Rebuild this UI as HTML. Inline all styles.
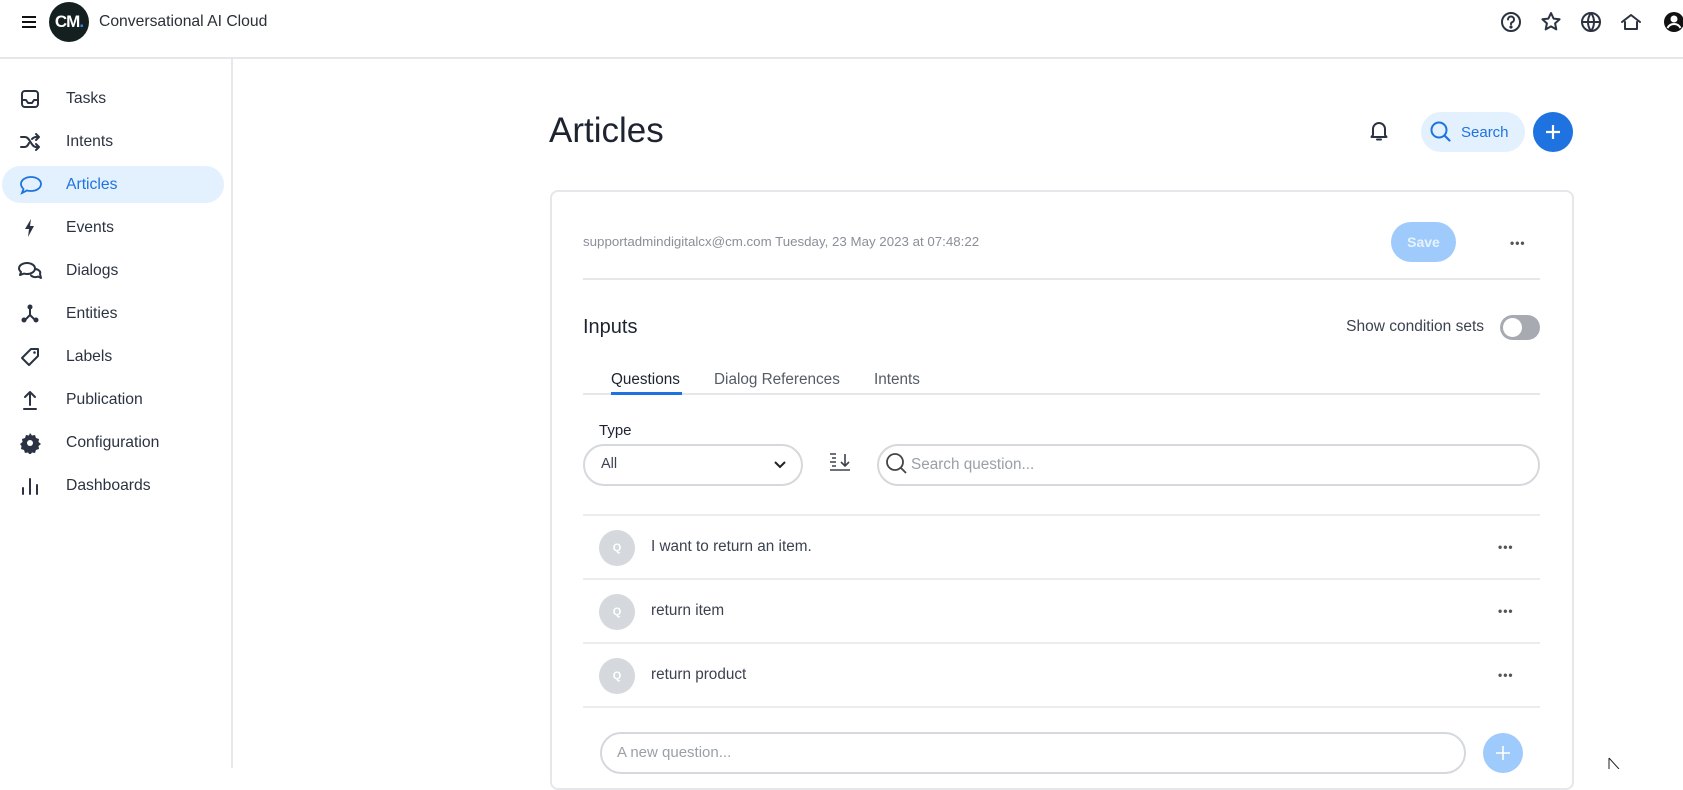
<!DOCTYPE html>
<html><head><meta charset="utf-8"><style>
*{box-sizing:border-box;margin:0;padding:0}
body{width:1683px;height:768px;overflow:hidden;background:#fff;font-family:"Liberation Sans",sans-serif;color:#1f2937;position:relative}
.abs{position:absolute}
.hdr{left:0;top:0;width:1683px;height:59px;border-bottom:2px solid #e6e7eb}
.side{left:0;top:59px;width:233px;height:709px;border-right:2px solid #e6e7eb}
.nav{position:absolute;left:0;width:222px;height:37px;display:flex;align-items:center;font-size:15.7px;color:#2b3342}
.nav svg{position:absolute;left:19px}
.nav span{position:absolute;left:66px}
.nav.act{background:#e3f0fd;border-radius:19px;left:2px;color:#1f73e0}
.nav.act span{left:64px}
.ti{fill:none;stroke:#2b3342;stroke-width:2;stroke-linecap:round;stroke-linejoin:round}
.card{left:550px;top:190px;width:1024px;height:600px;border:2px solid #e6e7eb;border-radius:8px}
.line{background:#e6e7eb;height:2px}
.dots{font-size:12px;color:#555;letter-spacing:1px;font-weight:bold}
.row{left:583px;width:957px;height:64px;border-bottom:2px solid #ececef}
.av{position:absolute;left:16px;top:14px;width:36px;height:36px;border-radius:50%;background:#d5d8dc;color:#fff;font-size:11px;font-weight:bold;text-align:center;line-height:36px}
.rt{position:absolute;left:68px;top:22px;font-size:15.3px;color:#3b4250}
.rd{position:absolute;left:915px;top:24px}
</style></head><body>
<div class="abs hdr"></div>
<svg class="abs" style="left:21px;top:14px" width="16" height="16"><path d="M1 3h14M1 8h14M1 13h14" stroke="#111" stroke-width="2"/></svg>
<div class="abs" style="left:49px;top:2px;width:40px;height:40px;border-radius:50%;background:#14201f;color:#fff;font-weight:bold;font-size:17px;line-height:40px;text-align:center;letter-spacing:-1px">CM<span style="color:#3b82f6">.</span></div>
<div class="abs" style="left:99px;top:13px;font-size:15.7px;color:#2b2f36">Conversational AI Cloud</div>
<svg class="abs" style="left:1500px;top:11px" width="184" height="24">
<g class="ti" stroke="#27313f"><circle cx="11" cy="11" r="9"/><path d="M8 8.5a3 3 0 1 1 4 2.8c-1 .4-1 1-1 2"/><circle cx="11" cy="16" r=".6" fill="#27313f"/>
<path d="M51 2l2.6 5.6 6 .7-4.5 4.1 1.2 6-5.3-3-5.3 3 1.2-6-4.5-4.1 6-.7z"/>
<circle cx="91" cy="11" r="9"/><path d="M82 11h18M91 2c-4 5-4 13 0 18M91 2c4 5 4 13 0 18"/>
<path d="M122 11l9-7 9 7M125 11v7h12v-7"/></g>
<circle cx="174" cy="11" r="10" fill="#111"/><circle cx="174" cy="8" r="3.5" fill="#fff"/><path d="M167.5 17c1.5-3 4-4 6.5-4s5 1 6.5 4" stroke="#fff" stroke-width="2" fill="none"/>
</svg>

<div class="abs side"></div>
<div class="nav" style="top:80px"><svg width="22" height="22"><rect class="ti" x="3" y="3" width="16" height="16" rx="3"/><path class="ti" d="M3 12h4l2 3h4l2-3h4"/></svg><span>Tasks</span></div>
<div class="nav" style="top:123px"><svg width="22" height="22"><path class="ti" d="M2 6h4c5 0 6 10 11 10h3M2 16h4c2 0 3-2 4-4M13 8c1-1 2-2 4-2h3M17 3l3 3-3 3M17 13l3 3-3 3"/></svg><span>Intents</span></div>
<div class="nav act" style="top:166px"><svg width="24" height="22" style="left:17px"><path d="M12 3c5.5 0 10 3 10 7s-4.5 7-10 7c-1.5 0-3-.2-4-.6L3 19l1.5-4C3 13.5 2 12 2 10c0-4 4.5-7 10-7z" fill="none" stroke="#1f73e0" stroke-width="1.8"/></svg><span>Articles</span></div>
<div class="nav" style="top:209px"><svg width="22" height="22"><path d="M12 2L6 12h4l-1 8 6-11h-4z" fill="#2b3342"/></svg><span>Events</span></div>
<div class="nav" style="top:252px"><svg width="26" height="22" style="left:17px"><path class="ti" d="M10 3c4.5 0 8 2.5 8 5.5S14.5 14 10 14c-1 0-2-.1-3-.4L3 15l1-3C3 11 2 10 2 8.5 2 5.5 5.5 3 10 3zM19 9c3 1 5 2.5 4 5l1 4-3-1.5c-2 1-5 1-7-1"/></svg><span>Dialogs</span></div>
<div class="nav" style="top:295px"><svg width="22" height="22"><g class="ti"><path d="M11 5v7l-6 6M11 12l6 6"/></g><circle cx="11" cy="4" r="2.5" fill="#2b3342"/><circle cx="5" cy="17" r="2.5" fill="#2b3342"/><circle cx="17" cy="17" r="2.5" fill="#2b3342"/></svg><span>Entities</span></div>
<div class="nav" style="top:338px"><svg width="22" height="22"><path class="ti" d="M12 3h7v7L10 19l-7-7z"/><circle cx="15.5" cy="6.5" r="1.3" fill="#2b3342"/></svg><span>Labels</span></div>
<div class="nav" style="top:381px"><svg width="22" height="22"><path class="ti" d="M11 16V3M6 8l5-5 5 5M5 20h12"/></svg><span>Publication</span></div>
<div class="nav" style="top:424px"><svg width="22" height="22"><path d="M11 2l2 2.5 3-.5 1 3 3 1-.5 3 2.5 2-2.5 2 .5 3-3 1-1 3-3-.5-2 2.5-2-2.5-3 .5-1-3-3-1 .5-3L1 13l2.5-2-.5-3 3-1 1-3 3 .5z" fill="#2b3342" transform="translate(0 -1)"/><circle cx="11" cy="11" r="3" fill="#fff"/></svg><span>Configuration</span></div>
<div class="nav" style="top:467px"><svg width="22" height="22"><path class="ti" d="M4 19v-6M11 19V4M18 19v-9"/></svg><span>Dashboards</span></div>

<div class="abs" style="left:549px;top:111px;font-size:35px;color:#1d2430">Articles</div>
<svg class="abs" style="left:1369px;top:120px" width="20" height="22"><path class="ti" stroke-width="1.6" d="M4 15V9a6 6 0 0 1 12 0v6l1.5 2h-15zM8 19.5h4"/></svg>
<div class="abs" style="left:1421px;top:112px;width:104px;height:40px;border-radius:20px;background:#e3f0fd"></div>
<svg class="abs" style="left:1429px;top:120px" width="24" height="24"><circle cx="10" cy="10" r="7.5" fill="none" stroke="#1f73e0" stroke-width="2"/><path d="M15.5 15.5l5 5" stroke="#1f73e0" stroke-width="2.2" stroke-linecap="round"/></svg>
<div class="abs" style="left:1461px;top:124px;font-size:15px;color:#1f73e0">Search</div>
<div class="abs" style="left:1533px;top:112px;width:40px;height:40px;border-radius:50%;background:#1f73e0"></div>
<svg class="abs" style="left:1543px;top:122px" width="20" height="20"><path d="M10 3v14M3 10h14" stroke="#fff" stroke-width="2.2"/></svg>

<div class="abs card"></div>
<div class="abs" style="left:583px;top:234px;font-size:13.3px;color:#8a8f98">supportadmindigitalcx@cm.com Tuesday, 23 May 2023 at 07:48:22</div>
<div class="abs" style="left:1391px;top:222px;width:65px;height:40px;border-radius:20px;background:#9ecbfb;color:#e8f3ff;font-size:14px;font-weight:bold;text-align:center;line-height:40px">Save</div>
<div class="abs dots" style="left:1510px;top:236px">•••</div>
<div class="abs line" style="left:583px;top:278px;width:957px"></div>
<div class="abs" style="left:583px;top:316px;font-size:20px;color:#1d2430">Inputs</div>
<div class="abs" style="left:1284px;top:318px;width:200px;text-align:right;font-size:15.5px;color:#3b4250">Show condition sets</div>
<div class="abs" style="left:1500px;top:315px;width:40px;height:25px;border-radius:13px;background:#a7abb1"></div>
<div class="abs" style="left:1503px;top:318px;width:19px;height:19px;border-radius:50%;background:#fff"></div>
<div class="abs" style="left:611px;top:371px;font-size:15.3px;color:#1d2430">Questions</div>
<div class="abs" style="left:714px;top:371px;font-size:15.3px;color:#555c66">Dialog References</div>
<div class="abs" style="left:874px;top:371px;font-size:15.3px;color:#555c66">Intents</div>
<div class="abs line" style="left:583px;top:393px;width:957px"></div>
<div class="abs" style="left:611px;top:392px;width:71px;height:3px;background:#1f73e0"></div>
<div class="abs" style="left:599px;top:422px;font-size:15px;color:#1d2430">Type</div>
<div class="abs" style="left:583px;top:444px;width:220px;height:42px;border:2px solid #d5d8dc;border-radius:21px"></div>
<div class="abs" style="left:601px;top:456px;font-size:14.5px;color:#3b4250">All</div>
<svg class="abs" style="left:772px;top:456px" width="16" height="16"><path d="M3 6l5 5 5-5" fill="none" stroke="#222" stroke-width="2"/></svg>
<svg class="abs" style="left:828px;top:451px" width="24" height="24"><path d="M2 3h6M2 11h6M2 19h20M4 7h4M4 15h4M17 3v12M13 11l4 4 4-4" fill="none" stroke="#3b4250" stroke-width="1.6"/></svg>
<div class="abs" style="left:877px;top:444px;width:663px;height:42px;border:2px solid #d5d8dc;border-radius:21px"></div>
<svg class="abs" style="left:884px;top:451px" width="26" height="26"><circle cx="11" cy="11" r="8" fill="none" stroke="#444" stroke-width="1.8"/><path d="M17 17l5 5" stroke="#444" stroke-width="1.8"/></svg>
<div class="abs" style="left:911px;top:456px;font-size:15.3px;color:#9aa0a8">Search question...</div>

<div class="abs line" style="left:583px;top:514px;width:957px;background:#ececef"></div>
<div class="abs row" style="top:516px"><div class="av">Q</div><div class="rt">I want to return an item.</div><div class="rd dots">•••</div></div>
<div class="abs row" style="top:580px"><div class="av">Q</div><div class="rt">return item</div><div class="rd dots">•••</div></div>
<div class="abs row" style="top:644px"><div class="av">Q</div><div class="rt">return product</div><div class="rd dots">•••</div></div>
<div class="abs" style="left:600px;top:732px;width:866px;height:42px;border:2px solid #d5d8dc;border-radius:21px"></div>
<div class="abs" style="left:617px;top:744px;font-size:15px;color:#9aa0a8">A new question...</div>
<div class="abs" style="left:1483px;top:733px;width:40px;height:40px;border-radius:50%;background:#9ecbfb"></div>
<svg class="abs" style="left:1493px;top:743px" width="20" height="20"><path d="M10 3v14M3 10h14" stroke="#fff" stroke-width="1.6"/></svg>
<svg class="abs" style="left:1608px;top:757px" width="14" height="12"><path d="M1 1v11M1 1l10 11" stroke="#222" stroke-width="1" fill="none"/></svg>
</body></html>
